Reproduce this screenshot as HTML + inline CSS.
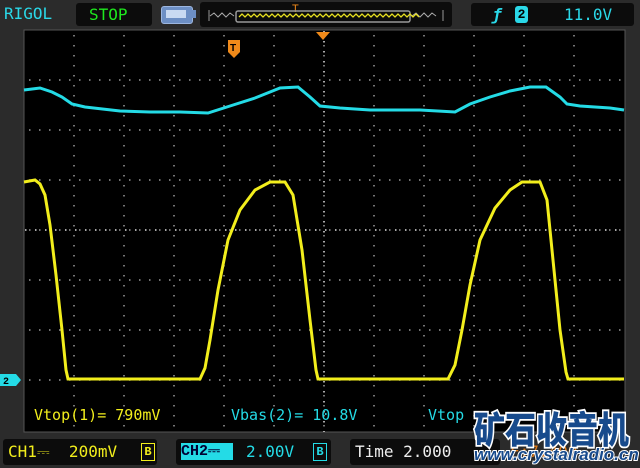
<!DOCTYPE html><html><head><meta charset="utf-8"><style>
body{margin:0;width:640px;height:468px;background:#2b2b2b;overflow:hidden;position:relative;font-family:"Liberation Mono",monospace}
.a{position:absolute}
.box{position:absolute;background:#0c0c0c;border-radius:3px}
.t{font-family:"DejaVu Sans Mono","Liberation Mono",monospace;font-size:15px;position:absolute;white-space:pre}
</style></head><body>
<div class="t" style="left:4px;top:4px;color:#2ad8e8;font-size:16px">RIGOL</div>
<div class="box" style="left:76px;top:3px;width:76px;height:23px"></div>
<div class="t" style="left:89px;top:5px;color:#1ee81e;font-size:16px">STOP</div>
<div class="a" style="left:161px;top:6px;width:30px;height:16px;background:#6d8fc4;border:1px solid #9cb6e0;border-radius:3px"></div>
<div class="a" style="left:166px;top:10px;width:20px;height:8px;background:#c9daf2"></div>
<div class="a" style="left:192px;top:10px;width:4px;height:8px;background:#6d8fc4"></div>
<div class="box" style="left:200px;top:2px;width:252px;height:25px"></div>
<svg class="a" style="left:200px;top:2px" width="252" height="25">
<text x="92" y="10" fill="#f08a1a" font-size="11" font-family="Liberation Sans">T</text>
<rect x="36" y="9" width="174" height="11" rx="2" fill="none" stroke="#999" stroke-width="1.5"/>
<path d="M9,8v11M243,8v11" stroke="#999"/>
<path d="M10,14 l4,-3 4,4 4,-4 4,4 4,-4 4,3" fill="none" stroke="#aaa"/>
<path d="M212,14 l4,-3 4,4 4,-4 4,4 4,-4 4,3" fill="none" stroke="#aaa"/>
<path d="M39,15 l3,-3 3,3 3,-3 3,3 3,-3 3,3 3,-3 3,3 3,-3 3,3 3,-3 3,3 3,-3 3,3 3,-3 3,3 3,-3 3,3 3,-3 3,3 3,-3 3,3 3,-3 3,3 3,-3 3,3 3,-3 3,3 3,-3 3,3 3,-3 3,3 3,-3 3,3 3,-3 3,3 3,-3 3,3 3,-3 3,3 3,-3 3,3 3,-3 3,3 3,-3 3,3 3,-3 3,3 3,-3 3,3 3,-3 3,3 3,-3 3,3 3,-3 3,3 3,-3 3,3 3,-3 3,3" fill="none" stroke="#e8e020" stroke-width="1.3"/>
</svg>
<div class="box" style="left:471px;top:3px;width:163px;height:23px"></div>
<div class="t" style="left:492px;top:5px;color:#2ad8e8;font-size:16px;font-style:italic;font-weight:bold">ƒ</div>
<div class="a" style="left:515px;top:6px;width:13px;height:17px;background:#2ad8e8;border-radius:3px;color:#000;font:bold 13px 'Liberation Mono';text-align:center;line-height:17px">2</div>
<div class="t" style="left:564px;top:5px;color:#2ad8e8;font-size:16px">11.0V</div>
<svg class="a" style="left:0;top:0" width="640" height="468">
<rect x="24" y="30" width="601" height="402" fill="#000" stroke="#555" stroke-width="1"/>
<g>
<path d="M74,30v402M124,30v402M174,30v402M224,30v402M274,30v402M324,30v402M374,30v402M424,30v402M474,30v402M524,30v402M574,30v402" stroke="#999" stroke-width="1.5" stroke-dasharray="1.5 8.5" stroke-dashoffset="-5"/>
<path d="M24,80h600M24,130h600M24,180h600M24,230h600M24,280h600M24,330h600M24,380h600" stroke="#999" stroke-width="1.5" stroke-dasharray="1.5 8.5" stroke-dashoffset="-5"/>
<path d="M24,230h600M324,30v402" stroke="#aaa" stroke-dasharray="1.5 8.5" stroke-width="2" stroke-dashoffset="-1"/>
</g>
<path d="M316,32h14l-7,8z" fill="#f08a1a"/>
<path d="M228,40h12v12l-6,6-6,-6z" fill="#f08a1a"/>
<text x="230" y="51" font-size="10" font-weight="bold" fill="#000" font-family="Liberation Sans">T</text>
<polyline fill="none" stroke="#24dbe6" stroke-width="3" points="24,90 40,88 52,92 62,97 72,104 85,107 120,111 150,112 180,112 208,113 230,106 255,98 270,92 280,88 298,87 310,97 320,106 340,108 370,110 420,110 455,112 470,104 490,97 510,91 530,87 546,87 560,97 567,104 580,106 610,108 624,110"/>
<polyline fill="none" stroke="#f2ee1c" stroke-width="3" points="24,182 35,180 40,184 45,195 50,225 56,275 62,330 66,370 68,379 80,379 200,379 205,368 210,340 218,290 228,240 240,210 255,190 270,182 285,182 293,195 302,250 310,320 316,370 318,379 330,379 448,379 455,365 462,330 470,285 480,240 495,208 510,190 522,182 540,182 547,200 553,260 560,330 566,372 568,379 624,379"/>
<path d="M0,374h16l5,6-5,6h-16z" fill="#24dbe6"/>
<text x="3" y="384" font-size="10" font-weight="bold" fill="#000" font-family="Liberation Mono">2</text>
</svg>
<div class="t" style="left:34px;top:406px;color:#f2ee1c">Vtop(1)= 790mV</div>
<div class="t" style="left:231px;top:406px;color:#24dbe6">Vbas(2)= 10.8V</div>
<div class="t" style="left:428px;top:406px;color:#24dbe6">Vtop</div>
<div class="box" style="left:3px;top:439px;width:154px;height:26px"></div>
<div class="t" style="left:8px;top:442px;color:#f2ee1c;font-size:16px">CH1⎓  200mV</div>
<div class="a" style="left:141px;top:443px;width:12px;height:16px;border:1px solid #f2ee1c;color:#f2ee1c;font:bold 12px 'Liberation Mono';text-align:center;line-height:16px">B</div>
<div class="box" style="left:176px;top:439px;width:155px;height:26px"></div>
<div class="a" style="left:181px;top:443px;width:52px;height:17px;background:#24dbe6;color:#003;font:bold 15px 'Liberation Mono';line-height:17px">CH2⎓</div>
<div class="t" style="left:246px;top:442px;color:#24dbe6;font-size:16px">2.00V</div>
<div class="a" style="left:313px;top:443px;width:12px;height:16px;border:1px solid #24dbe6;color:#24dbe6;font:bold 12px 'Liberation Mono';text-align:center;line-height:16px">B</div>
<div class="box" style="left:350px;top:439px;width:150px;height:26px"></div>
<div class="t" style="left:355px;top:442px;color:#eee;font-size:16px">Time 2.000</div>
<div class="t" style="left:510px;top:442px;color:#e07a18;font-size:16px">F:7.400</div>
<div class="a" style="left:474px;top:401px;font:900 31px 'Noto Sans CJK SC',sans-serif;color:#174a8c;-webkit-text-stroke:3px #fff;paint-order:stroke fill;line-height:44px;white-space:nowrap;transform:scaleY(1.2);transform-origin:top left">矿石收音机</div>
<div class="a" style="left:474px;top:445px;font:bold italic 17px 'Liberation Sans',sans-serif;color:#174a8c;-webkit-text-stroke:2px #fff;paint-order:stroke fill;white-space:nowrap">www.crystalradio.cn</div>
</body></html>
